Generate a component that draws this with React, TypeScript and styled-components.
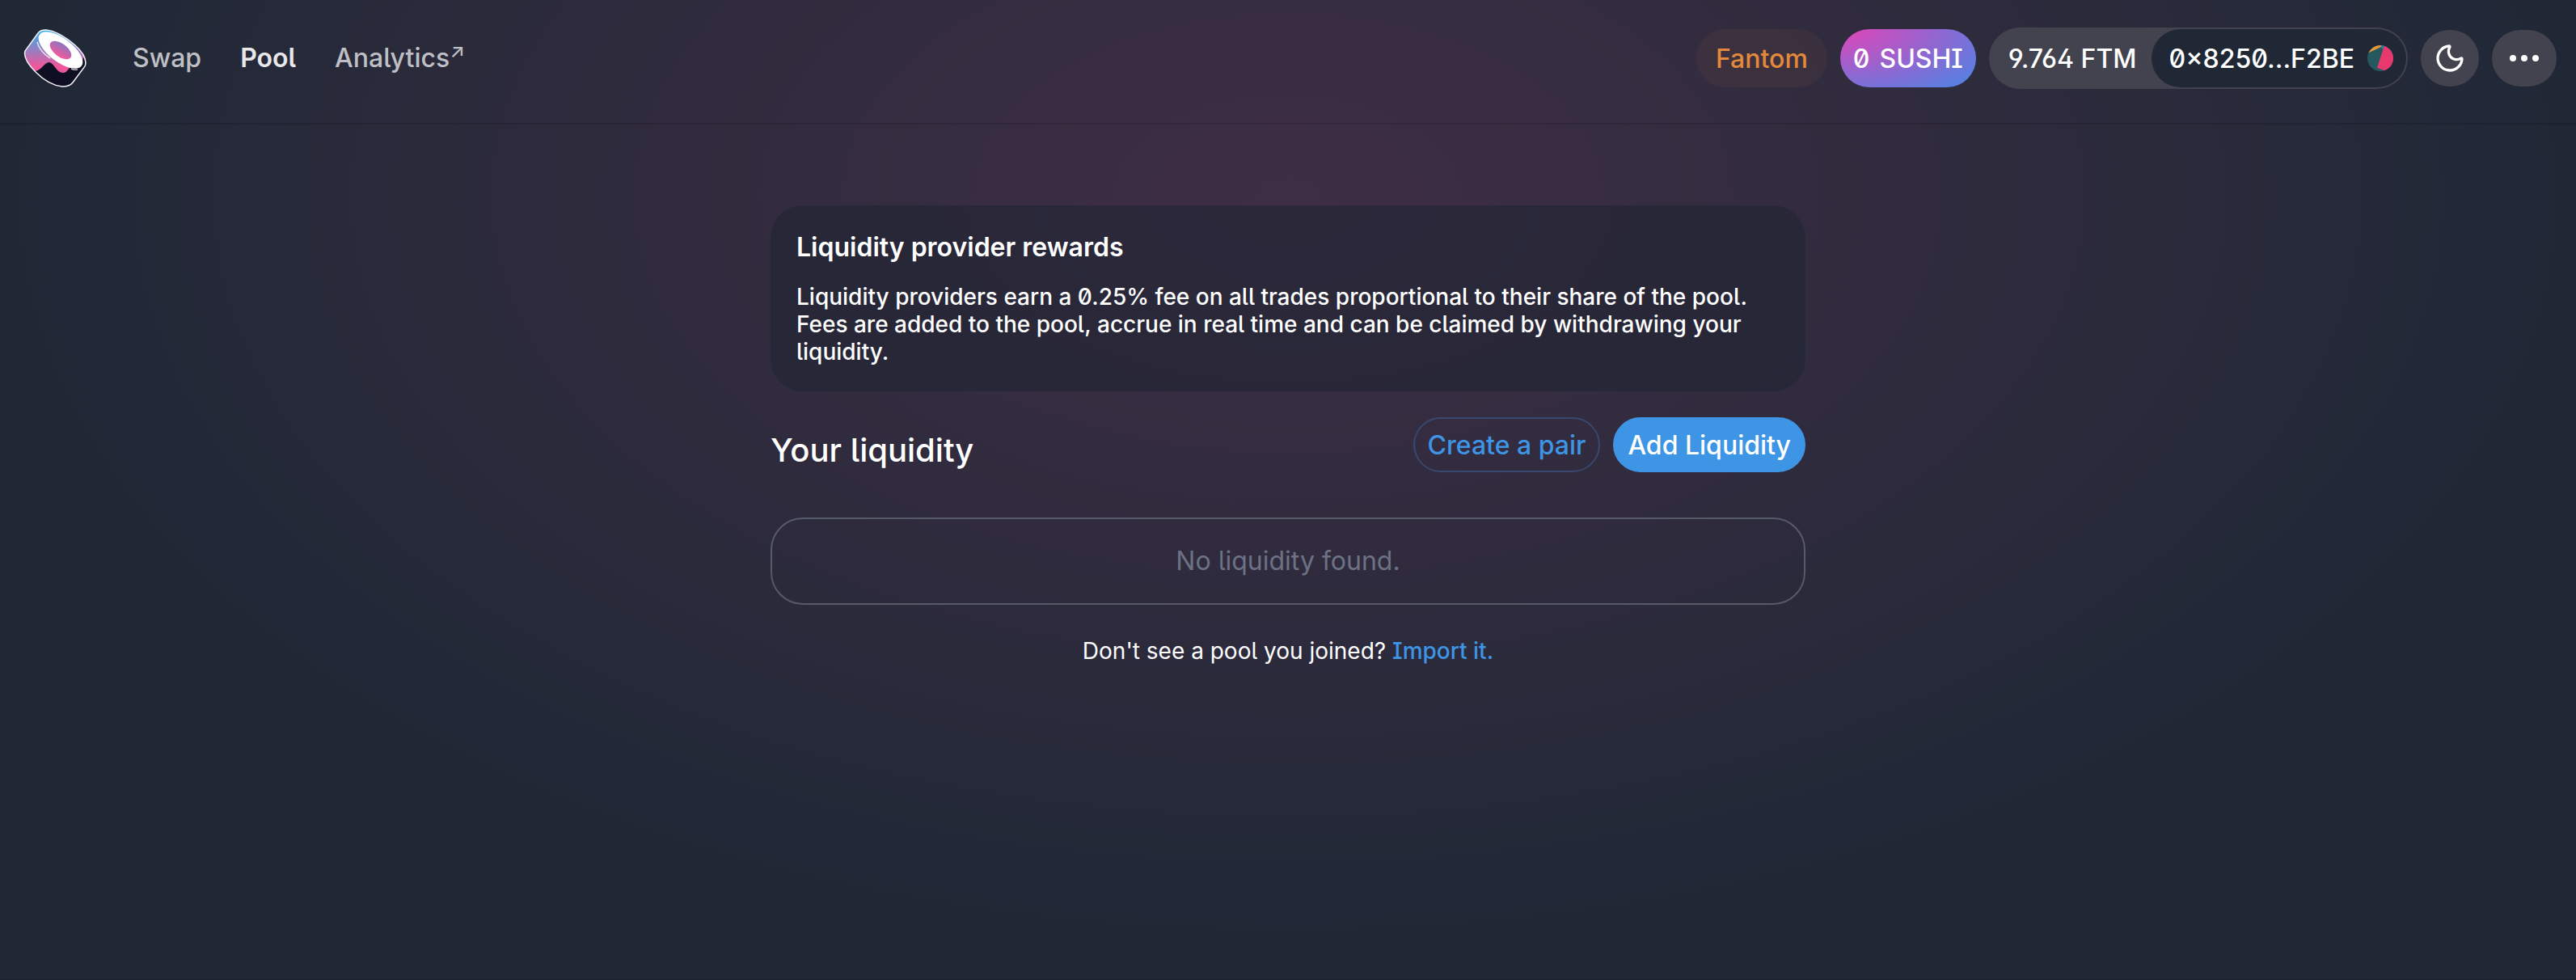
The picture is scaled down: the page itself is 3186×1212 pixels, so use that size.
import React from "react";
import styled, { createGlobalStyle, css } from "styled-components";
import { Moon } from "lucide-react";

const GlobalStyle = createGlobalStyle`
  * { box-sizing: border-box; }
  html { background: #202836; }
  body {
    margin: 0;
    min-height: 100vh;
    color: #fff;
    font-family: Inter, "Noto Sans", sans-serif;
    font-size: 32px;
    font-weight: 500;
    font-feature-settings: "ss01" on, "ss02" on, "cv01" on, "cv03" on;
    background: radial-gradient(50% 76% at 50% 20%, rgba(250, 82, 160, 0.14) 0%, rgba(250, 82, 160, 0) 100%) no-repeat;
  }
  button, a { font: inherit; font-feature-settings: inherit; color: inherit; }
  a { text-decoration: none; }
  button { border: 0; background: none; padding: 0; cursor: pointer; }
`;

const Page = styled.div`
  min-height: 100vh;
  border-bottom: 2px solid rgba(0, 0, 0, 0.12);
`;

const Header = styled.header`
  display: flex;
  align-items: center;
  justify-content: space-between;
  height: 154px;
  padding: 0 24px 8px 28px;
  border-bottom: 2px solid rgba(0, 0, 0, 0.12);
`;

const Group = styled.div<{ $gap: number }>`
  display: flex;
  align-items: center;
  gap: ${(p) => p.$gap}px;
`;

const Brand = styled.a`
  display: flex;
  margin-right: 56px;
`;

const Nav = styled.nav`
  display: flex;
  align-items: center;
  gap: 48px;
`;

const NavLink = styled.a<{ $active?: boolean }>`
  color: ${(p) => (p.$active ? "#e8e8ea" : "#bfc0c6")};
  font-weight: ${(p) => (p.$active ? 600 : 500)};
  line-height: 40px;
`;

const Arrow = styled.sup`
  font-size: 24px;
  line-height: 0;
`;

const Pill = styled.button<{ $kind: "network" | "sushi" }>`
  display: flex;
  align-items: center;
  gap: 12px;
  height: 72px;
  border-radius: 36px;
  ${(p) =>
    p.$kind === "network"
      ? css`
          padding: 0 24px;
          color: #e3893b;
          background: rgba(227, 137, 59, 0.06);
        `
      : css`
          padding: 0 16px;
          background: radial-gradient(174% 189% at 2% 0%, #e045b8 0%, #1d98f4 100%);
        `}
`;

const Wallet = styled.div`
  display: flex;
  align-items: center;
  height: 76px;
  padding: 2px;
  border-radius: 38px;
  background: #42434e;
`;

const Balance = styled.span`
  padding: 0 18px 0 22px;
`;

const Account = styled.button`
  display: flex;
  align-items: center;
  gap: 16px;
  height: 72px;
  padding: 0 16px 0 22px;
  border-radius: 36px;
  background: #202836;
`;

const RoundButton = styled.button<{ $wide?: boolean }>`
  display: flex;
  align-items: center;
  justify-content: center;
  width: ${(p) => (p.$wide ? 80 : 72)}px;
  height: 70px;
  border-radius: 36px;
  background: #42434e;
`;

const Main = styled.main`
  width: 100%;
  max-width: 1280px;
  margin: 0 auto;
  padding-top: 100px;
`;

const InfoCard = styled.section`
  padding: 32px;
  border-radius: 40px;
  background: rgba(32, 37, 51, 0.62);
`;

const CardTitle = styled.h2`
  margin: 0 0 24px;
  font-size: 32px;
  font-weight: 600;
  line-height: 40px;
`;

const CardText = styled.p`
  margin: 0;
  font-size: 28px;
  line-height: 34px;
`;

const TitleRow = styled.div`
  display: flex;
  align-items: flex-start;
  justify-content: space-between;
  margin: 32px 0 56px;
`;

const Title = styled.h1`
  margin: 16px 0 0;
  font-size: 40px;
  font-weight: 500;
  line-height: 50px;
`;

const Action = styled.button<{ $primary?: boolean }>`
  height: 68px;
  padding: 0 16px;
  border: 2px solid ${(p) => (p.$primary ? "#3e95e5" : "#38486e")};
  border-radius: 34px;
  color: ${(p) => (p.$primary ? "#fff" : "#3e95e5")};
  background: ${(p) => (p.$primary ? "#3e95e5" : "transparent")};
`;

const Empty = styled.div`
  padding: 34px;
  border: 2px solid #565a69;
  border-radius: 40px;
  color: #6c7284;
  font-weight: 400;
  line-height: 36px;
  text-align: center;
`;

const Hint = styled.p`
  margin: 40px 0 0;
  font-size: 28px;
  font-weight: 400;
  line-height: 34px;
  text-align: center;
`;

const ImportLink = styled.a`
  color: #3e95e5;
  font-weight: 500;
`;

const Logo = () => (
  <svg width="80" height="74" viewBox="28 35 80 74" aria-label="Sushi">
    <defs>
      <linearGradient id="roll" x1="0" y1="0" x2="0" y2="1">
        <stop offset="0" stopColor="#2bb0ee" />
        <stop offset="0.65" stopColor="#f0569b" />
      </linearGradient>
      <linearGradient id="core" x1="0" y1="0" x2="0.3" y2="1">
        <stop offset="0" stopColor="#7f78c4" />
        <stop offset="1" stopColor="#ee5a9e" />
      </linearGradient>
    </defs>
    <path d="M47 41C49 38 52 37 57 37C67 38 80 45 93 56C103 65 108 74 105 82L90 102C87 106 83 107 77 107C66 106 55 100 44 89C34 79 29 70 31 63Z" fill="url(#roll)" />
    <path d="M44 88C52 86 55 77 61 77C68 79 70 91 79 90C84 89 84 84 88 83C94 84 99 83 101 79L103 71Q107 77 105 82L90 102C87 106 83 107 77 107C66 106 55 100 44 89Z" fill="#0e0f23" />
    <ellipse cx="75" cy="62" rx="32.5" ry="14.5" transform="rotate(37 75 62)" fill="#fff" />
    <ellipse cx="75" cy="62" rx="15.5" ry="8" transform="rotate(37 75 62)" fill="url(#core)" />
    <path d="M46 52C48 60 54 67 62 72M88 85Q92 87 96 86" fill="none" stroke="#fff" strokeOpacity="0.75" strokeWidth="1.5" />
    <path d="M47 41C49 38 52 37 57 37C67 38 80 45 93 56C103 65 108 74 105 82L90 102C87 106 83 107 77 107C66 106 55 100 44 89C34 79 29 70 31 63Z" fill="none" stroke="#f4f4f6" strokeWidth="1.5" />
  </svg>
);

const Identicon = () => (
  <svg width="32" height="32" viewBox="0 0 32 32" aria-hidden="true">
    <defs>
      <clipPath id="disc">
        <circle cx="16" cy="16" r="16" />
      </clipPath>
    </defs>
    <g clipPath="url(#disc)">
      <rect width="32" height="32" fill="#25595f" />
      <path d="M0 10L17 2V0H0Z" fill="#e6973a" />
      <path d="M17 2L19 5L21 0H17Z" fill="#2a7fc0" />
      <path d="M21 0L12 28L24 32H32V0Z" fill="#e8396f" />
    </g>
  </svg>
);

const Dots = () => (
  <svg width="38" height="8" viewBox="0 0 38 8" fill="#fff" aria-hidden="true">
    <circle cx="5" cy="4" r="4" />
    <circle cx="19" cy="4" r="4" />
    <circle cx="33" cy="4" r="4" />
  </svg>
);

export default function App() {
  return (
    <Page>
      <GlobalStyle />
      <Header>
        <Group $gap={0}>
          <Brand href="#">
            <Logo />
          </Brand>
          <Nav>
            <NavLink href="#swap">Swap</NavLink>
            <NavLink href="#pool" $active>Pool</NavLink>
            <NavLink href="#analytics">
              Analytics<Arrow>↗</Arrow>
            </NavLink>
          </Nav>
        </Group>
        <Group $gap={16}>
          <Pill $kind="network">Fantom</Pill>
          <Pill $kind="sushi">
            <span>0</span>
            <span>SUSHI</span>
          </Pill>
          <Wallet>
            <Balance>9.764 FTM</Balance>
            <Account>
              0×8250...F2BE
              <Identicon />
            </Account>
          </Wallet>
          <RoundButton aria-label="Dark theme">
            <Moon size={40} strokeWidth={2} />
          </RoundButton>
          <RoundButton $wide aria-label="More">
            <Dots />
          </RoundButton>
        </Group>
      </Header>
      <Main>
        <InfoCard>
          <CardTitle>Liquidity provider rewards</CardTitle>
          <CardText>
            Liquidity providers earn a 0.25% fee on all trades proportional to their share of the pool. Fees are
            added to the pool, accrue in real time and can be claimed by withdrawing your liquidity.
          </CardText>
        </InfoCard>
        <TitleRow>
          <Title>Your liquidity</Title>
          <Group $gap={16}>
            <Action>Create a pair</Action>
            <Action $primary>Add Liquidity</Action>
          </Group>
        </TitleRow>
        <Empty>No liquidity found.</Empty>
        <Hint>
          Don't see a pool you joined? <ImportLink href="#import">Import it.</ImportLink>
        </Hint>
      </Main>
    </Page>
  );
}
